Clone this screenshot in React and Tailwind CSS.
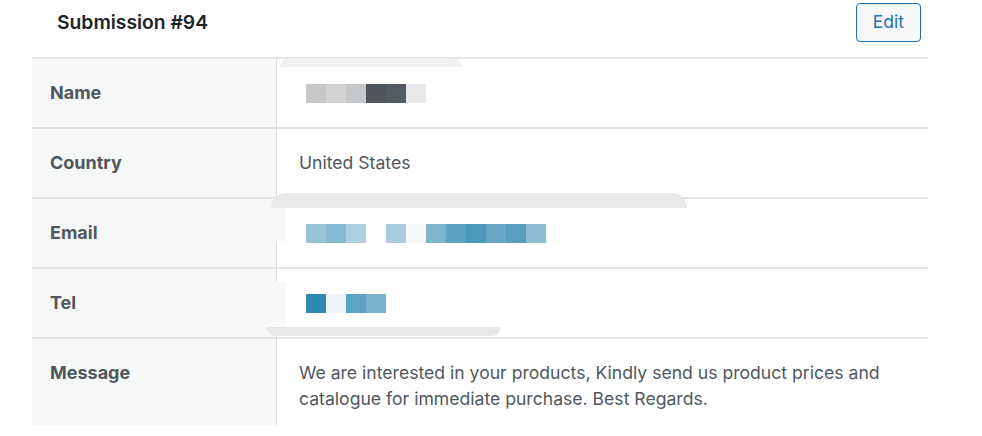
import React from 'react';

// redaction pixel blocks, 20px each
const nameBlocks = ['#c5c7c8', '#d1d2d3', '#c6c7c8', '#50555c', '#555b62', '#e8e8ea'];
const emailBlocks = [
  '#9bc3d6', '#85b8d1', '#acd0df', 'transparent', '#a9cddd', '#f7f9fa',
  '#7fb4cd', '#5ba1c2', '#4b99bb', '#67a6c4', '#589fc0', '#8bbcd2',
];
const telBlocks = ['#2f8ab3', '#eef4f8', '#5ca3c3', '#7ab3cd'];

function Pixels({ colors }) {
  return (
    <div className="h-[26px] flex items-center pl-[7px]">
      <div className="flex h-[19px]">
        {colors.map((c, i) => (
          <span key={i} className="w-[20px] h-full" style={{ backgroundColor: c }} />
        ))}
      </div>
    </div>
  );
}

function Row({ label, children, last }) {
  return (
    <div className="flex border-t-2 border-[#e4e4e6]">
      <div className={`w-[245px] shrink-0 bg-[#f6f7f7] border-r border-[#dcdcde] pl-[18px] pt-[21px] ${last ? 'pb-[13px]' : 'pb-[21px]'}`}>
        <span className="text-[18px] leading-[26px] font-bold text-[#50575e]">{label}</span>
      </div>
      <div className={`flex-1 pl-[22px] pr-6 pt-[21px] ${last ? 'pb-[13px]' : 'pb-[21px]'} text-[17.6px] leading-[26px] text-[#50575e]`}>
        {children}
      </div>
    </div>
  );
}

export default function App() {
  return (
    <div className="relative w-[982px] h-[436px] bg-white overflow-hidden" style={{ fontFamily: 'Inter, "Open Sans", sans-serif' }}>
      <div className="h-[57px] pl-[57px] pr-[61px] flex items-center justify-between">
        <h1 className="text-[19.3px] font-semibold text-[#1d2327] -mt-[13px]">Submission #94</h1>
        <button className="h-[39px] px-[16px] -mt-[12px] rounded-[4px] border border-[#2271b1] bg-[#f6f7f7] text-[#2271b1] text-[17.5px]">
          Edit
        </button>
      </div>

      <div className="ml-[32px] w-[896px]">
        <Row label="Name"><Pixels colors={nameBlocks} /></Row>
        <Row label="Country">United States</Row>
        <Row label="Email"><Pixels colors={emailBlocks} /></Row>
        <Row label="Tel"><Pixels colors={telBlocks} /></Row>
        <Row label="Message" last>
          We are interested in your products, Kindly send us product prices and catalogue for immediate purchase. Best Regards.
        </Row>
      </div>

      {/* redaction edges left by the screenshot tool */}
      <div className="absolute left-[280px] top-[58px] w-[182px] h-[9px] rounded-t-[14px] bg-[#f1f1f2]" />
      <div className="absolute left-[271px] top-[193px] w-[416px] h-[15px] rounded-t-[16px] bg-[#e8e9eb]" />
      <div className="absolute left-[271px] top-[208px] w-[15px] h-[33px] bg-[#f7f8f8]" />
      <div className="absolute left-[271px] top-[282px] w-[15px] h-[45px] bg-[#f7f8f8]" />
      <div className="absolute left-[267px] top-[327px] w-[234px] h-[9px] rounded-b-[14px] bg-[#e6e7e9]" />
    </div>
  );
}
